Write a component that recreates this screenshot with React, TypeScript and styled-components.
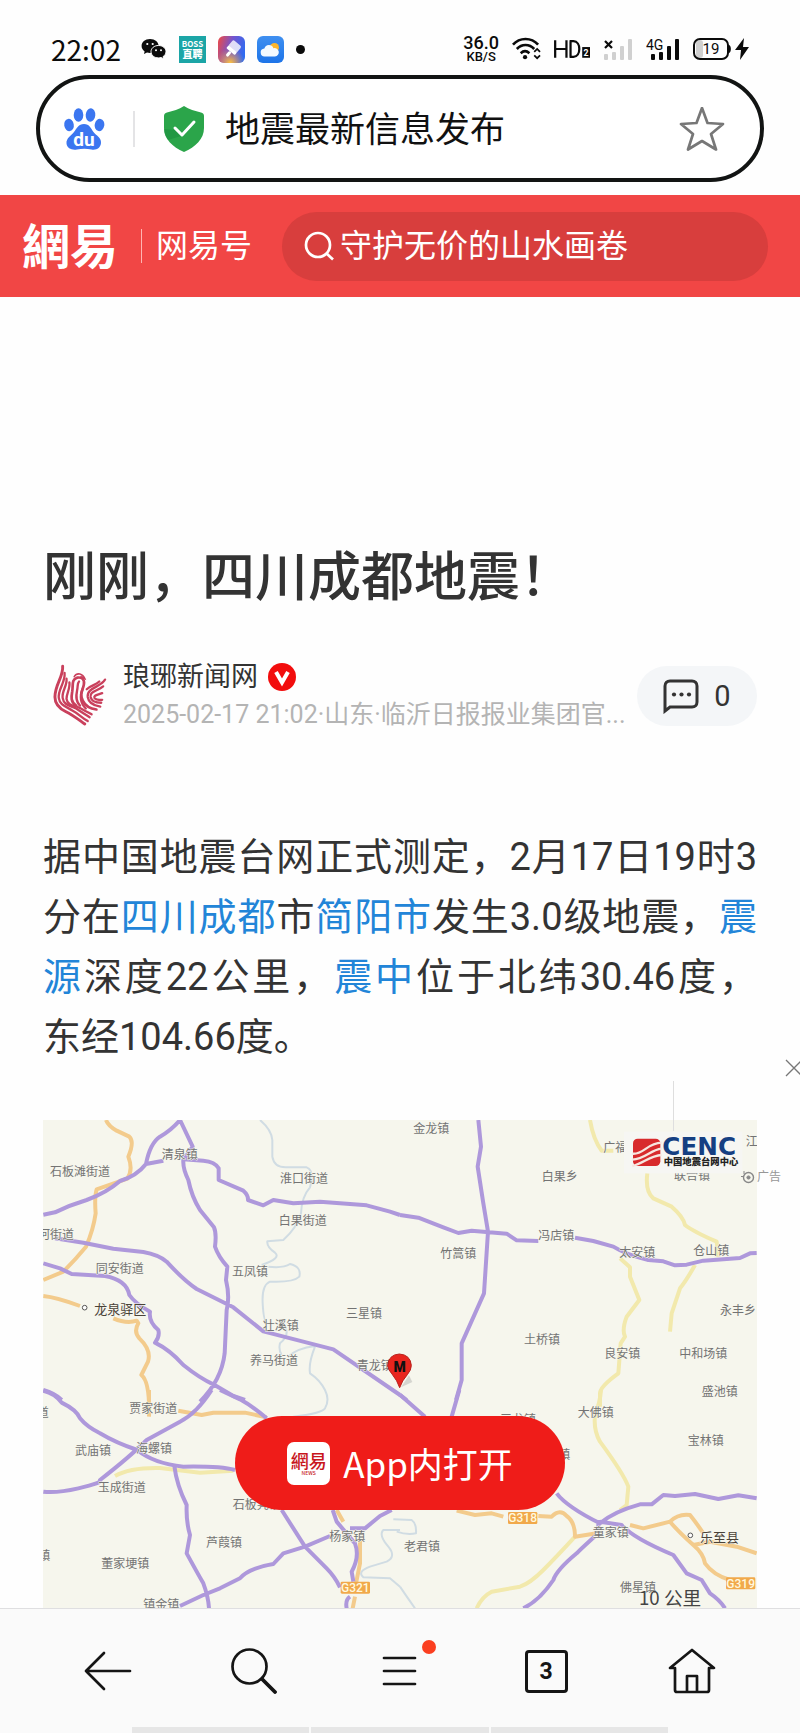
import React from "react";
import styled, { createGlobalStyle } from "styled-components";

const GlobalStyle = createGlobalStyle`
  * { box-sizing: border-box; }
  body {
    margin: 0;
    background: #fefefe;
    color: #333;
    font-family: Roboto, "Noto Sans CJK SC", sans-serif;
  }
  button, input { font: inherit; color: inherit; }
  button { padding: 0; border: 0; background: none; cursor: pointer; }
  a { text-decoration: none; }
  svg { display: block; flex: none; }
`;

const Page = styled.div`
  display: flex;
  flex-direction: column;
  min-height: 100vh;
  overflow-x: hidden;
`;

/* ---------- system status bar ---------- */

const StatusBar = styled.div`
  display: flex;
  align-items: center;
  justify-content: space-between;
  height: 75px;
  padding: 23px 50px 0 51px;
  color: #0b0b0b;
`;

const StatusGroup = styled.div<{ $gap: number }>`
  display: flex;
  align-items: center;
  gap: ${(p) => p.$gap}px;
`;

const Clock = styled.time`
  margin-right: 8px;
  font: 400 28px/32px "Noto Sans CJK SC", sans-serif;
`;

const BossIcon = styled.span`
  display: flex;
  flex-direction: column;
  align-items: center;
  justify-content: center;
  width: 27px;
  height: 27px;
  background: #1ba5a6;
  color: #fff;
  font: 700 8px/9px "Noto Sans CJK SC", sans-serif;
  b { font-size: 10px; line-height: 11px; font-weight: 900; }
`;

const Dot = styled.span`
  width: 9px;
  height: 9px;
  border-radius: 50%;
  background: #0b0b0b;
`;

const NetSpeed = styled.span`
  display: flex;
  flex-direction: column;
  align-items: center;
  font-weight: 500;
  font-size: 18px;
  line-height: 15px;
  small { font-size: 13px; line-height: 13px; }
`;

/* ---------- browser address pill ---------- */

const AddressBar = styled.form`
  display: flex;
  align-items: center;
  height: 107px;
  margin: 0 36px;
  padding: 0 35px 0 23px;
  border: 4px solid #121413;
  border-radius: 54px;
  background: #fff;
`;

const AddressDivider = styled.span`
  width: 2px;
  height: 36px;
  margin: 0 28px;
  background: #e4e4e6;
`;

const AddressInput = styled.input`
  flex: 1;
  min-width: 0;
  margin-left: 20px;
  padding: 4px 0 0;
  border: 0;
  outline: 0;
  background: none;
  color: #111;
  font-size: 35px;
  line-height: 48px;
`;

/* ---------- site header ---------- */

const SiteHeader = styled.header`
  display: flex;
  align-items: center;
  height: 102px;
  margin-top: 13px;
  padding: 0 32px 0 22px;
  background: #f14645;
  color: #fff;
`;

const SiteLogo = styled.a`
  padding-bottom: 6px;
  color: #fff;
  font: 700 48px/60px "Noto Sans CJK TC", sans-serif;
`;

const SiteDivider = styled.span`
  width: 1px;
  height: 34px;
  margin: 0 14px 0 23px;
  background: #ffb5b2;
`;

const SiteSection = styled.a`
  color: #fff;
  font-size: 32px;
  line-height: 48px;
`;

const SiteSearch = styled.label`
  display: flex;
  flex: 1;
  align-items: center;
  gap: 6px;
  min-width: 0;
  height: 69px;
  margin-left: 30px;
  padding: 0 22px;
  border-radius: 35px;
  background: #d83e3d;
  input {
    flex: 1;
    min-width: 0;
    padding: 0;
    border: 0;
    outline: 0;
    background: none;
    font-size: 32px;
    line-height: 48px;
  }
`;

/* ---------- article ---------- */

const Article = styled.article`
  flex: 1;
  padding: 248px 43px 0;
`;

const Title = styled.h1`
  margin: 0;
  color: #333;
  font-weight: 500;
  font-size: 53px;
  line-height: 66px;
`;

const Byline = styled.div`
  display: flex;
  align-items: center;
  height: 76px;
  margin-top: 47px;
`;

const Avatar = styled.a`
  width: 80px;
  padding-left: 10px;
`;

const Author = styled.div`
  flex: 1;
  min-width: 0;
`;

const AuthorName = styled.a`
  display: flex;
  align-items: center;
  gap: 10px;
  color: #333;
  font-size: 27px;
  line-height: 38px;
`;

const Meta = styled.div`
  overflow: hidden;
  color: #b4b4b4;
  font-size: 25px;
  line-height: 38px;
  white-space: nowrap;
`;

const CommentButton = styled.button`
  display: flex;
  align-items: center;
  justify-content: center;
  gap: 14px;
  width: 120px;
  height: 60px;
  border-radius: 30px;
  background: #f4f6f8;
  font-size: 29px;
`;

const Paragraph = styled.p`
  margin: 93px 0 53px;
  font-size: 38px;
  line-height: 60px;
  text-align: justify;
  a { color: #2285d8; }
`;

const NoBreak = styled.span`
  white-space: nowrap;
`;

const MapFigure = styled.figure`
  position: relative;
  margin: 0;
  > svg { width: 100%; height: auto; }
`;

const OpenInApp = styled.button`
  position: absolute;
  bottom: 98px;
  left: 50%;
  display: flex;
  align-items: center;
  justify-content: center;
  gap: 13px;
  width: 330px;
  height: 94px;
  margin-left: -165px;
  border-radius: 47px;
  background: #ef1c19;
  color: #fff;
  font: 400 35px/48px "Noto Sans CJK SC", sans-serif;
`;

const AppBadge = styled.span`
  display: flex;
  flex-direction: column;
  align-items: center;
  justify-content: center;
  width: 43px;
  height: 43px;
  border-radius: 7px;
  background: #fff;
  color: #c8161d;
  font: 500 18px/20px "Noto Sans CJK TC", sans-serif;
  small { font-size: 5px; line-height: 6px; }
`;

/* Floating advert, partly past the right edge of the window */
const FloatingAd = styled.aside`
  position: absolute;
  top: -61px;
  right: -43px;
  display: flex;
  flex-direction: column;
  width: 127px;
  overflow: hidden;
`;

const AdClose = styled.button`
  align-self: flex-end;
  height: 22px;
  margin-right: -3px;
  svg { margin-bottom: 4px; }
`;

const AdEdge = styled.span`
  width: 1px;
  height: 50px;
  background: #dedede;
`;

const AdTag = styled.span`
  display: flex;
  align-items: center;
  gap: 2px;
  margin-top: 36px;
  padding-left: 68px;
  color: #979797;
  font-size: 12px;
  line-height: 20px;
`;

/* ---------- bottom navigation ---------- */

const BottomNav = styled.nav`
  display: flex;
  flex-direction: column;
  justify-content: space-between;
  height: 125px;
  border-top: 1px solid #dfdfe1;
  background: #fafafa;
`;

const NavButtons = styled.div`
  display: grid;
  grid-template-columns: repeat(5, 1fr);
  height: 124px;
  padding: 0 35px;
`;

const NavButton = styled.button`
  position: relative;
  display: flex;
  align-items: center;
  justify-content: center;
`;

const UnreadDot = styled.span`
  position: absolute;
  top: 31px;
  left: calc(50% + 22px);
  width: 14px;
  height: 14px;
  border-radius: 50%;
  background: #fb3f20;
`;

const Tabs = styled.span`
  display: flex;
  align-items: center;
  justify-content: center;
  width: 43px;
  height: 43px;
  border: 3px solid #151515;
  border-radius: 4px;
  color: #151515;
  font-weight: 700;
  font-size: 23px;
`;

const KeyStrip = styled.div`
  display: flex;
  gap: 2px;
  height: 6px;
  margin-top: -6px;
  padding: 0 132px;
  span { flex: 1; background: #e6e6e6; }
`;

/* ---------- icons ---------- */

const WeChatIcon = () => (
  <svg width="26" height="23" viewBox="0 0 26 23">
    <path d="M9 1C4 1 .6 4 .6 8c0 2.300 1.200 4.200 3 5.400L3 16l3-1.500c1 .3 2 .4 3 .4 5 0 8.600-3 8.600-7S14 1 9 1z" fill="#0b0b0b" />
    <path d="M17.500 7.500c-4.300 0-7.500 2.700-7.500 6.200s3.200 6.200 7.500 6.200c1 0 1.800-.1 2.600-.4l2.500 1.400-.5-2.300c1.800-1.200 2.900-3 2.900-4.900 0-3.500-3.200-6.200-7.500-6.200z" fill="#0b0b0b" stroke="#fff" strokeWidth="1" />
    <g fill="#fff"><circle cx="6.300" cy="6" r="1.100" /><circle cx="11.700" cy="6" r="1.100" /><circle cx="15" cy="12.300" r="1" /><circle cx="20" cy="12.300" r="1" /></g>
  </svg>
);

const BrushIcon = () => (
  <svg width="27" height="27" viewBox="0 0 27 27">
    <defs>
      <linearGradient id="brushBg" x1="0" y1=".3" x2="1" y2=".6">
        <stop offset="0" stopColor="#e04a55" /><stop offset=".45" stopColor="#7355cf" /><stop offset="1" stopColor="#2d6cf2" />
      </linearGradient>
      <radialGradient id="brushGlow" cx=".45" cy="1" r=".55">
        <stop offset="0" stopColor="#ffc23a" /><stop offset="1" stopColor="#f59a50" stopOpacity="0" />
      </radialGradient>
    </defs>
    <rect width="27" height="27" rx="6" fill="url(#brushBg)" />
    <rect width="27" height="27" rx="6" fill="url(#brushGlow)" />
    <g transform="rotate(40 14 13)">
      <rect x="9" y="5" width="11" height="9" rx="2" fill="#fff" opacity=".8" />
      <rect x="9" y="12.500" width="11" height="3.500" rx="1" fill="#fff" />
      <rect x="13" y="16" width="3" height="6" rx="1.500" fill="#fff" />
    </g>
  </svg>
);

const WeatherIcon = () => (
  <svg width="27" height="27" viewBox="0 0 27 27">
    <defs><linearGradient id="sky" x1="0" y1="0" x2="0" y2="1"><stop offset="0" stopColor="#3f8ff0" /><stop offset="1" stopColor="#1d74e8" /></linearGradient></defs>
    <rect width="27" height="27" rx="6" fill="url(#sky)" />
    <circle cx="17.500" cy="11.500" r="4.500" fill="#fdb62c" />
    <path d="M8 20.500a4 4 0 0 1-.6-8 4.700 4.700 0 0 1 9-.2 4.200 4.200 0 1 1 1.600 8.200z" fill="#f4faff" />
  </svg>
);

const WifiIcon = () => (
  <svg width="29" height="24" viewBox="0 0 30 24" fill="none" stroke="#0b0b0b" strokeWidth="2.700">
    <path d="M1 7.500C8-.2 20-.2 27 7.500M5 12c5-5.500 13-5.500 18 0M9 16.300c3-2.700 6-2.700 9 0" />
    <circle cx="13.500" cy="20.500" r="2.200" fill="#0b0b0b" stroke="none" />
    <path d="M23 15l3-3 3 3M23 18.500l3 3 3-3" strokeWidth="1.800" />
  </svg>
);

const HdIcon = () => (
  <svg width="36" height="24" viewBox="0 0 37 24">
    <path d="M1.200 3v18M12.800 3v18M1.200 12h11.600M17 4v16M16 4h4c8 0 8 16 0 16h-4" fill="none" stroke="#0b0b0b" strokeWidth="2.300" />
    <rect x="29" y="10" width="8" height="11" fill="#0b0b0b" />
    <text x="33" y="19" fontSize="9" fontWeight="700" textAnchor="middle" fill="#fff">2</text>
  </svg>
);

const NoSignalIcon = () => (
  <svg width="30" height="24" viewBox="0 0 30 24">
    <path d="M2 4l7 7M9 4l-7 7" stroke="#0b0b0b" strokeWidth="2.200" />
    <g fill="#d0d0d0"><rect x="1" y="17" width="4" height="6" rx="1" /><rect x="9" y="15" width="4" height="8" rx="1" /><rect x="17" y="9" width="4" height="14" rx="1" /><rect x="25" y="2" width="4" height="21" rx="1" /></g>
  </svg>
);

const SignalIcon = () => (
  <svg width="34" height="24" viewBox="0 0 34 24">
    <text x="0" y="13" fontSize="14" fill="#0b0b0b">4G</text>
    <g fill="#0b0b0b"><rect x="5" y="17" width="4" height="6" rx="1" /><rect x="13" y="15" width="4" height="8" rx="1" /><rect x="21" y="9" width="4" height="14" rx="1" /><rect x="29" y="2" width="4" height="21" rx="1" /></g>
  </svg>
);

const BatteryIcon = () => (
  <svg width="57" height="24" viewBox="0 0 57 24">
    <rect x="3" y="3" width="7" height="18" rx="3" fill="#d0d0d0" />
    <rect x="1" y="2" width="34" height="20" rx="6" fill="none" stroke="#0b0b0b" strokeWidth="2" />
    <path d="M36 8c2.500 1 2.500 7 0 8" fill="#0b0b0b" />
    <text x="18" y="17" fontSize="15" textAnchor="middle" fill="#0b0b0b">19</text>
    <path d="M51 1l-9 12h6l-1 10 9-13h-6z" fill="#0b0b0b" />
  </svg>
);

const BaiduIcon = () => (
  <svg width="42" height="44" viewBox="0 0 42 44">
    <g fill="#3b76f0">
      <ellipse cx="6" cy="18" rx="4.800" ry="6.200" transform="rotate(-10 6 18)" />
      <ellipse cx="15.500" cy="8" rx="4.800" ry="6.800" />
      <ellipse cx="27.500" cy="8" rx="4.800" ry="6.800" transform="rotate(5 27.500 8)" />
      <ellipse cx="36.500" cy="18" rx="4.800" ry="6.200" transform="rotate(10 36.500 18)" />
      <path d="M21 17c5.500 0 7 4.500 9.500 8s8 5.500 7.500 11c-.4 5-4.500 7.400-9.500 6.500-5-.9-9.500-.9-14.500 0S4 41.500 3.500 36.500C3 31 8.500 28.500 11 25s4.500-8 10-8z" />
    </g>
    <text x="21" y="39" fontSize="19" fontWeight="700" textAnchor="middle" fill="#fff">du</text>
  </svg>
);

const ShieldIcon = () => (
  <svg width="42" height="46" viewBox="0 0 42 46">
    <path d="M21 0c5 3.500 11 5 17 6.500 2 .5 3 1.500 3 3.500V22c0 11-8.500 19-20 24C9.500 41 1 33 1 22V10c0-2 1-3 3-3.500C10 5 16 3.500 21 0z" fill="#2ba54a" />
    <path d="M12 24l6 6L5 34C2.500 30.500 1 27 1 23z" fill="#178b3c" opacity=".5" />
    <path d="M12 22l7 7 12-13" fill="none" stroke="#fff" strokeWidth="3" strokeLinecap="round" strokeLinejoin="round" />
  </svg>
);

const StarIcon = () => (
  <svg width="46" height="44" viewBox="0 0 46 44">
    <path d="M23 1l5.500 15L44 17 32 27l5 15.500L23 34 9 42.500 14 27 2 17l15.500-1z" fill="none" stroke="#777" strokeWidth="2.700" strokeLinejoin="round" />
  </svg>
);

const HeaderSearchIcon = () => (
  <svg width="30" height="30" viewBox="0 0 30 30" fill="none" stroke="#fff" strokeWidth="2.700">
    <circle cx="14" cy="14" r="12" /><path d="M22 22l7 6.500" />
  </svg>
);

const PhoenixAvatar = () => (
  <svg width="54" height="64" viewBox="0 0 56 64" fill="none" stroke="#c9405c" strokeWidth="2.400" strokeLinecap="round">
    <path d="M10 1C11 12 2 20 2 33c0 8 5 12 11 15 8 4 13 8 20 13" strokeWidth="3" />
    <path d="M12 8c1 10-7 17-6 26 1 8 8 9 14 13 6 3 9 7 16 11" />
    <path d="M14 14c1 7-5 13-4 20 1 8 9 8 14 11 6 4 9 6 14 9" />
    <path d="M17 18c1 6-3 11-3 17 1 7 8 7 13 9 5 3 8 4 13 7" />
    <path d="M24 42c-6-4-5-9-4-15 1-7-1-12 5-14 5-1 8 2 7 7-1 6-5 10-1 17 2 4 7 8 14 9" strokeWidth="2.800" />
    <path d="M28 42c-5-5-4-11-3-16 1-4 0-7 2-9M34 45c-7-7-6-14-3-21" />
    <path d="M54 15c-4 8-19 8-18 18 1 7 7 9 13 10M52 22c-6 5-14 5-13 11 1 5 6 6 11 6M51 29c-5 2-9 2-8 5 1 2 4 2 8 2M35 25c4-4 9-4 13-8" />
    <path d="M22 12c3-5 9-3 11 2l-4-2" strokeWidth="1.600" />
  </svg>
);

const VerifiedIcon = () => (
  <svg width="28" height="28" viewBox="0 0 28 28">
    <circle cx="14" cy="14" r="14" fill="#f20d0d" />
    <path d="M8 9l6 10.500L20 9" fill="none" stroke="#fff" strokeWidth="4" />
  </svg>
);

const CommentIcon = () => (
  <svg width="37" height="35" viewBox="0 0 37 35">
    <path d="M2 32V7c0-3 2-5 5-5h22c3 0 5 2 5 5v16c0 3-2 5-5 5H7z" fill="none" stroke="#333" strokeWidth="3" />
    <g fill="#333"><circle cx="11" cy="15.500" r="2.100" /><circle cx="18.500" cy="15.500" r="2.100" /><circle cx="26" cy="15.500" r="2.100" /></g>
  </svg>
);

const CloseIcon = () => (
  <svg width="18" height="18" viewBox="0 0 18 18" stroke="#777" strokeWidth="1.300"><path d="M1 1l16 16M17 1L1 17" /></svg>
);

const AdIcon = () => (
  <svg width="14" height="14" viewBox="0 0 14 14" fill="none" stroke="#888"><circle cx="7.500" cy="7.500" r="5" strokeWidth="1.400" /><circle cx="7.500" cy="7.500" r="1.600" fill="#888" /><path d="M0 6.500h3M3 1v3" /></svg>
);

const BackIcon = () => (
  <svg width="48" height="40" viewBox="0 0 48 40" fill="none" stroke="#151515" strokeWidth="2.700" strokeLinecap="round" strokeLinejoin="round"><path d="M20 2L2 20l18 18M2 20h44" /></svg>
);

const SearchIcon = () => (
  <svg width="46" height="46" viewBox="0 0 46 46" fill="none" stroke="#151515" strokeLinecap="round"><circle cx="18.500" cy="18.500" r="17" strokeWidth="2.700" /><path d="M31 31l13 13" strokeWidth="3.800" /></svg>
);

const MenuIcon = () => (
  <svg width="36" height="30" viewBox="0 0 36 30" stroke="#151515" strokeWidth="2.700" strokeLinecap="round"><path d="M2 2h31M2 15h31M2 28h31" /></svg>
);

const HomeIcon = () => (
  <svg width="48" height="46" viewBox="0 0 48 46" fill="none" stroke="#151515" strokeWidth="2.700" strokeLinejoin="round" strokeLinecap="round"><path d="M2 20L24 2l22 18h-5v22c0 1.500-.5 2-2 2H9c-1.500 0-2-.5-2-2V20zM19 44V28h10v16" /></svg>
);

/* ---------- map ---------- */

type Label = [string, number, number];

interface Sheet {
  x: number;
  y: number;
  water?: string;
  minor?: string;
  trunk?: string;
  motorway: string;
  towns: Label[];
  cities?: Label[];
  shields?: Label[];
}

const sheets: Sheet[] = [
  {
    x: 0,
    y: 3300,
    water: "M780 60q35 30 37 60V170q5 32 40 32H920q25 10 10 60Q905 290 903 340Q890 385 850 420L802 424Q800 440 825 458Q845 475 785 495M805 500Q850 505 870 492Q905 500 898 530Q880 548 810 545Q785 555 788 610T800 665M855 680Q870 705 840 730Q835 750 845 765M865 770Q890 745 945 738M945 740Q925 790 930 820Q960 840 975 870T975 925Q965 940 880 950Q872 960 872 980",
    trunk: "M318 60Q325 78 350 92L388 110Q404 125 385 170Q400 210 382 236L290 268Q283 290 287 340Q280 390 258 440Q225 480 190 515L130 540M130 588Q170 592 240 618M340 655Q380 672 410 662L415 670Q400 695 418 715Q455 750 444 785L424 825Q450 845 447 950",
    motorway: "M130 344L165 337Q210 315 260 300Q320 278 360 243Q410 228 438 192L490 182M438 192Q450 130 480 110Q515 90 540 60M540 60L578 140L550 180Q548 205 565 240Q575 290 600 330L642 382Q650 400 645 440Q655 470 682 500L678 540Q690 590 680 630L674 760Q665 840 600 905M550 178L610 182Q645 185 656 205V240L730 272Q745 285 744 300L790 316L820 300L880 310L960 305L1100 316L1170 335L1200 345M165 415L250 428L340 446L430 456Q475 464 500 485Q550 540 590 567L700 622L790 694L1000 748L1200 885M130 490L180 505L215 522L315 528Q380 540 388 585Q405 610 450 635Q445 665 475 690Q480 710 465 728Q510 750 550 795Q600 835 640 853L700 888L735 900M130 870Q165 880 185 900",
    towns: [["石板滩街道", 150, 213], ["清泉镇", 485, 163], ["淮口街道", 840, 236], ["白果街道", 836, 362], ["河街道", 114, 403], ["同安街道", 287, 505], ["五凤镇", 696, 513], ["三星镇", 1038, 640], ["壮溪镇", 788, 675], ["养马街道", 750, 781], ["青龙镇", 1070, 797]],
    cities: [["龙泉驿区", 283, 628]],
  },
  {
    x: 1200,
    y: 3150,
    minor: "M570 210Q580 270 605 302H640M742 370Q735 425 760 445L815 470Q850 500 855 525Q880 545 950 575L955 620M660 625L690 652L690 680Q700 705 718 750L680 800Q665 840 675 860L662 880L655 970Q600 1010 600 1030T600 1070M885 645Q860 690 840 715L815 790L810 845",
    motorway: "M235 210L243 290L233 350L250 460L264 545L252 730L185 880V990L168 1050M0 495L55 503L130 532L175 549L215 542L320 551L350 571L415 573M525 563L580 573L640 590Q680 615 745 630L790 634L825 646L860 644L910 632L1020 624L1050 610L1070 609M0 1035L20 1050",
    towns: [["金龙镇", 40, 235], ["白果乡", 425, 380], ["广福镇", 610, 291], ["江镇", 1037, 275], ["联合镇", 822, 377], ["冯店镇", 415, 557], ["太安镇", 658, 608], ["仓山镇", 880, 600], ["竹篙镇", 121, 609], ["永丰乡", 960, 782], ["土桥镇", 372, 869], ["良安镇", 613, 911], ["中和场镇", 838, 910], ["盛池镇", 905, 1025]],
  },
  {
    x: 0,
    y: 4170,
    water: "M1200 420L1150 420Q1135 435 1165 470Q1190 500 1160 515L1110 530Q1070 545 1090 562L1170 565L1200 590",
    minor: "M345 258Q390 232 480 234L600 248L700 242",
    trunk: "M447 0V35M535 62L605 75L640 68L735 68L800 82M1010 360L1030 395M1080 450V520L1068 580M1065 620L1058 655",
    motorway: "M130 2Q165 10 185 38Q230 60 240 85Q260 110 300 130Q350 160 412 180M635 0Q590 70 540 95L440 150Q390 200 300 270Q310 278 235 295Q170 310 130 305M412 180Q460 220 550 230Q660 228 705 240M660 0L720 28Q760 50 800 85M523 228Q530 285 560 345Q558 395 570 435L560 490Q590 545 610 580Q625 620 627 655M845 360L915 470L980 535Q1005 560 1020 592M540 648L610 615L660 595L720 565Q745 535 820 522L850 490L915 470L990 438M1050 415H1095L1140 378L1175 360M998 360L1010 395L1065 460Q1080 500 1055 545L1060 575M1050 620Q1035 630 1040 655",
    towns: [["贾家街道", 388, 55], ["武庙镇", 225, 181], ["海螺镇", 408, 175], ["玉成街道", 293, 292], ["石板凳镇", 698, 344], ["芦葭镇", 618, 456], ["董家埂镇", 304, 519], ["镇金镇", 430, 643], ["杨家镇", 988, 438], ["镇", 115, 497], ["道", 110, 68]],
    shields: [["G321", 1022, 575]],
  },
  {
    x: 1200,
    y: 4170,
    water: "M-20 388L35 390Q50 400 48 430Q20 435 -10 425M0 590Q20 620 45 655",
    minor: "M603 0Q600 40 585 75Q580 120 600 155Q670 250 685 290L680 345L660 360M525 440Q470 500 430 540Q390 580 360 590L275 605Q245 620 230 655",
    trunk: "M170 362L225 375L275 370L310 380M415 378L455 380Q480 355 500 378Q525 395 525 440L590 430M690 405L730 415L810 395Q835 370 870 375Q890 400 910 430M808 393Q835 425 880 465L930 455L1010 470L1070 490M880 465Q910 490 915 520Q940 555 990 570",
    motorway: "M0 14L75 80M178 0L155 80M470 310Q500 350 600 400Q640 365 720 343H755L790 315L825 318L885 312L955 327L1015 316L1070 325M595 390V430Q550 470 530 490Q470 540 460 570Q420 630 370 655M600 395L665 405Q700 445 820 495L860 550L905 570L930 610Q960 630 975 655",
    towns: [["三龙镇", 300, 88], ["镇", 475, 192], ["大佛镇", 533, 66], ["宝林镇", 863, 150], ["老君镇", 12, 470], ["童家镇", 578, 427], ["佛星镇", 660, 592]],
    cities: [["乐至县", 900, 441]],
    shields: [["G318", 324, 366], ["G319", 978, 562]],
  },
];

const MapDrawing = () => (
  <svg viewBox="129 3360 2142 1464" role="img" aria-label="震中位置图" fill="none" strokeLinejoin="round" fontFamily='"Noto Sans CJK SC", sans-serif'>
    <rect x="129" y="3360" width="2142" height="1464" fill="#f6f6ed" />
    {sheets.map((s) => (
      <g key={`${s.x}-${s.y}`} transform={`translate(${s.x} ${s.y})`}>
        {s.water && <path d={s.water} stroke="#d0dce3" strokeWidth="6" />}
        {s.minor && <path d={s.minor} stroke="#f2e9ac" strokeWidth="12" />}
        {s.trunk && <path d={s.trunk} stroke="#f3cb8c" strokeWidth="12" />}
        <path d={s.motorway} stroke="#ae98db" strokeWidth="12" />
      </g>
    ))}
    {sheets.map((s) => (
      <g key={`${s.x}-${s.y}`} transform={`translate(${s.x} ${s.y - 3})`} fontSize="36" dominantBaseline="central">
        {s.towns.map(([name, x, y]) => (
          <text key={name} x={x} y={y} fill="#737373" stroke="#f6f6ed" strokeWidth="3" paintOrder="stroke">{name}</text>
        ))}
        {s.cities?.map(([name, x, y]) => (
          <g key={name}>
            <circle cx={x - 29} cy={y - 2} r="7" fill="#fff" stroke="#555" strokeWidth="3" />
            <text x={x} y={y} fontSize="39" fill="#4a4238" stroke="#f6f6ed" strokeWidth="3" paintOrder="stroke">{name}</text>
          </g>
        ))}
        {s.shields?.map(([name, x, y]) => (
          <g key={name}>
            <rect x={x} y={y + 3} width="88" height="36" rx="4" fill="#f1a94b" />
            <text x={x + 44} y={y + 22} textAnchor="middle" fontSize="36" fontWeight="500" fontFamily="Roboto, sans-serif" fill="#fff8df">{name}</text>
          </g>
        ))}
      </g>
    ))}
    <text x="1917" y="4815" fontSize="56" fill="#444">10 公里</text>

    <path d="M1203 4162l34-16-10-20z" fill="#999" opacity=".35" />
    <path d="M1199 4163Q1192 4142 1176 4122Q1163 4108 1163 4096Q1166 4064 1198 4062Q1231 4064 1234 4096Q1234 4110 1222 4124Q1206 4142 1199 4163z" fill="#e8251e" stroke="#b8201b" strokeWidth="3" />
    <text x="1199" y="4116" textAnchor="middle" fontSize="42" fontWeight="900" fontFamily="Roboto, sans-serif" fill="#111">M</text>

    <rect x="1872" y="3395" width="355" height="125" fill="#f6f6f3" />
    <rect x="1899" y="3416" width="82" height="82" rx="14" fill="#d82a2c" />
    <path d="M1897 3461C1930 3465 1940 3430 1985 3428M1897 3479C1935 3478 1950 3450 1985 3446M1897 3498C1930 3490 1950 3467 1985 3465" stroke="#f7e6df" strokeWidth="7" />
    <text x="1987" y="3466" fontSize="74" fontWeight="700" fontFamily="DejaVu Sans, sans-serif" fill="#153f82">CENC</text>
    <text x="1991" y="3494" fontSize="28" fontWeight="900" fill="#222">中国地震台网中心</text>
  </svg>
);

export default function App() {
  return (
    <Page lang="zh-CN">
      <GlobalStyle />
      <StatusBar>
        <StatusGroup $gap={12}>
          <Clock>22:02</Clock>
          <WeChatIcon />
          <BossIcon>BOSS<b>直聘</b></BossIcon>
          <BrushIcon />
          <WeatherIcon />
          <Dot />
        </StatusGroup>
        <StatusGroup $gap={13}>
          <NetSpeed>36.0<small>KB/S</small></NetSpeed>
          <WifiIcon />
          <HdIcon />
          <NoSignalIcon />
          <SignalIcon />
          <BatteryIcon />
        </StatusGroup>
      </StatusBar>

      <AddressBar onSubmit={(e) => e.preventDefault()}>
        <BaiduIcon />
        <AddressDivider />
        <ShieldIcon />
        <AddressInput aria-label="搜索或输入网址" defaultValue="地震最新信息发布" />
        <button type="button" aria-label="收藏"><StarIcon /></button>
      </AddressBar>

      <SiteHeader>
        <SiteLogo href="#home">網易</SiteLogo>
        <SiteDivider />
        <SiteSection href="#dy">网易号</SiteSection>
        <SiteSearch>
          <HeaderSearchIcon />
          <input aria-label="搜索" defaultValue="守护无价的山水画卷" />
        </SiteSearch>
      </SiteHeader>

      <Article>
        <Title>刚刚，四川成都地震！</Title>
        <Byline>
          <Avatar href="#author" aria-label="琅琊新闻网"><PhoenixAvatar /></Avatar>
          <Author>
            <AuthorName href="#author">琅琊新闻网<VerifiedIcon /></AuthorName>
            <Meta>2025-02-17 21:02·山东·临沂日报报业集团官...</Meta>
          </Author>
          <CommentButton aria-label="评论"><CommentIcon />0</CommentButton>
        </Byline>
        <Paragraph>
          据中国地震台网正式测定，2月17日19时3分在<a href="#chengdu">四川成都</a>市<a href="#jianyang">简阳市</a>发生3.0级地震，<a href="#focus">震源</a>深度22公里，<a href="#epicenter">震中</a>位于北纬30.46度，<NoBreak>东经</NoBreak>104.66度。
        </Paragraph>
        <MapFigure>
          <MapDrawing />
          <FloatingAd>
            <AdClose aria-label="关闭广告"><CloseIcon /></AdClose>
            <AdEdge />
            <AdTag><AdIcon />广告</AdTag>
          </FloatingAd>
          <OpenInApp>
            <AppBadge>網易<small>NEWS</small></AppBadge>
            App内打开
          </OpenInApp>
        </MapFigure>
      </Article>

      <BottomNav>
        <NavButtons>
          <NavButton aria-label="返回"><BackIcon /></NavButton>
          <NavButton aria-label="搜索"><SearchIcon /></NavButton>
          <NavButton aria-label="菜单"><MenuIcon /><UnreadDot /></NavButton>
          <NavButton aria-label="标签页"><Tabs>3</Tabs></NavButton>
          <NavButton aria-label="主页"><HomeIcon /></NavButton>
        </NavButtons>
        <KeyStrip><span /><span /><span /></KeyStrip>
      </BottomNav>
    </Page>
  );
}
